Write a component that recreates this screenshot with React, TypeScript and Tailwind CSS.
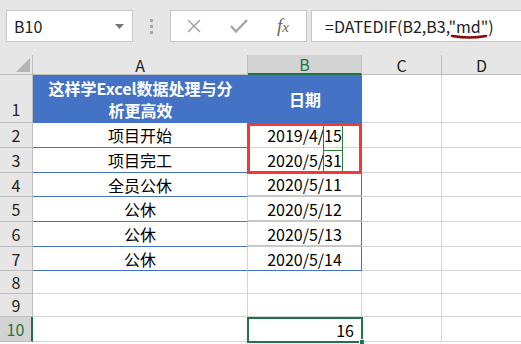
import React from "react";

const F = { fontFamily: '"Noto Sans CJK SC", "Noto Sans", sans-serif' };

const rowH = [48, 25, 25, 24, 25, 25, 24, 23, 23, 25];

type CellProps = { children?: React.ReactNode; className?: string };

function Cell({ children, className = "" }: CellProps) {
  return <div className={`flex items-center overflow-visible whitespace-nowrap text-[16px] text-black ${className}`}>{children}</div>;
}

function Boxed({ pre, tail, top }: { pre: string; tail: string; top: boolean }) {
  return (
    <span>
      {pre}
      <span className="relative">
        {tail}
        <span
          className={`absolute left-[-1px] right-[-1px] border border-[#2e7d32] ${top ? "top-[-2px] bottom-[-4px]" : "top-[-3px] bottom-[-2px] border-t-0"}`}
        />
      </span>
    </span>
  );
}

export default function App() {
  const aText = ["项目开始", "项目完工", "全员公休", "公休", "公休", "公休", "", "", ""];
  const bText: React.ReactNode[] = [
    <Boxed key="a" pre="2019/4/" tail="15" top />,
    <Boxed key="b" pre="2020/5/" tail="31" top={false} />,
    "2020/5/11",
    "2020/5/12",
    "2020/5/13",
    "2020/5/14",
    "",
    "",
    "",
  ];
  return (
    <div className="w-[521px] h-[344px] overflow-hidden bg-white relative" style={F}>
      {/* Toolbar */}
      <div className="h-[55px] bg-[#e6e6e6] flex items-start pt-[10px] pl-[6px]">
        <div className="w-[127px] h-[32px] bg-white border border-[#c6c6c6] flex items-center justify-between pl-[7px] pr-[8px]">
          <span className="text-[16px] text-[#222]">B10</span>
          <svg width="9" height="5" viewBox="0 0 9 5"><path d="M0 0 L9 0 L4.5 5 Z" fill="#777" /></svg>
        </div>
        <div className="w-[37px] h-[32px] flex flex-col items-center justify-center gap-[3px]">
          <div className="w-[3px] h-[3px] bg-[#a8a8a8]" />
          <div className="w-[3px] h-[3px] bg-[#a8a8a8]" />
          <div className="w-[3px] h-[3px] bg-[#a8a8a8]" />
        </div>
        <div className="w-[137px] h-[32px] bg-white border border-[#c6c6c6] flex items-center">
          <div className="w-[46px] flex justify-center">
            <svg width="16" height="16" viewBox="0 0 16 16"><path d="M2 2 L14 14 M14 2 L2 14" stroke="#a6a6a6" strokeWidth="1.6" /></svg>
          </div>
          <div className="w-[44px] flex justify-center">
            <svg width="18" height="16" viewBox="0 0 18 16"><path d="M1 8 L6 13.5 L17 2" stroke="#a6a6a6" strokeWidth="2.4" fill="none" /></svg>
          </div>
          <div className="w-[44px] flex justify-center">
            <span className="text-[19px] italic text-[#666]" style={{ fontFamily: '"Liberation Serif", serif' }}>f<span className="text-[15px]">x</span></span>
          </div>
        </div>
        <div className="ml-[4px] flex-1 h-[32px] bg-white border border-r-0 border-[#c6c6c6] flex items-center pl-[13px] relative">
          <span className="text-[16px] text-[#222]">=DATEDIF(B2,B3,"md")</span>
        </div>
      </div>
      {/* underline annotation */}
      <svg className="absolute left-[450px] top-[33px]" width="40" height="8" viewBox="0 0 40 8">
        <path d="M2 3 Q20 6 36 3" stroke="#8b0a0a" strokeWidth="2.6" fill="none" strokeLinecap="round" />
      </svg>

      {/* Grid */}
      <div
        className="grid relative"
        style={{ gridTemplateColumns: "33px 215px 114px 80px 79px", gridTemplateRows: `20px ${rowH.map((h) => h + "px").join(" ")}` }}
      >
        {/* header row */}
        <div className="bg-[#e6e6e6] border-r border-b border-[#bdbdbd] relative">
          <svg className="absolute right-[2px] bottom-[2px]" width="14" height="14" viewBox="0 0 14 14"><path d="M14 0 L14 14 L0 14 Z" fill="#b4b4b4" /></svg>
        </div>
        <div className="bg-[#e6e6e6] border-r border-b border-[#bdbdbd] flex items-center justify-center text-[16px] text-[#222]">A</div>
        <div className="bg-[#d3d3d3] border-r border-[#bdbdbd] border-b-2 border-b-[#217346] flex items-center justify-center text-[16px] text-[#217346]">B</div>
        <div className="bg-[#e6e6e6] border-r border-b border-[#bdbdbd] flex items-center justify-center text-[16px] text-[#222]">C</div>
        <div className="bg-[#e6e6e6] border-b border-[#bdbdbd] flex items-center justify-center text-[16px] text-[#222]">D</div>

        {/* row 1 */}
        <div className="bg-[#e6e6e6] border-r border-b border-[#bdbdbd] flex items-end justify-center text-[16px] text-[#222] pb-[1px]">1</div>
        <div className="bg-[#4472c4] border-b border-[#4472c4] flex flex-col items-center justify-center text-white font-bold text-[16px] leading-[22px]">
          <div>这样学Excel数据处理与分</div>
          <div>析更高效</div>
        </div>
        <div className="bg-[#4472c4] border-b border-[#4472c4] flex items-center justify-center text-white font-bold text-[16px]">日期</div>
        <div className="border-r border-b border-[#d4d4d4]" />
        <div className="border-b border-[#d4d4d4]" />

        {aText.map((a, i) => {
          const r = i + 2;
          const inTable = r <= 7;
          const sel = r === 10;
          return (
            <React.Fragment key={r}>
              <div
                className={`border-b border-[#bdbdbd] flex items-center justify-center text-[16px] ${
                  sel ? "bg-[#d3d3d3] text-[#217346] border-r-2 border-r-[#217346]" : "bg-[#e6e6e6] text-[#222] border-r border-r-[#bdbdbd]"
                }`}
              >
                {r}
              </div>
              <Cell className={`justify-center ${inTable ? "border-b border-[#4472c4]" : "border-b border-[#d4d4d4]"} border-r border-r-[#d4d4d4]`}>{a}</Cell>
              <Cell
                className={`justify-center ${
                  inTable
                    ? r === 7
                      ? "border-b border-[#4472c4] border-r border-r-[#4472c4]"
                      : r >= 4
                      ? "border-b-2 border-[#c8c8c8] border-r border-r-[#4472c4]"
                      : "border-b border-[#d4d4d4] border-r border-r-[#4472c4]"
                    : "border-b border-r border-[#d4d4d4]"
                }`}
              >
                {bText[i]}
              </Cell>
              <div className="border-r border-b border-[#d4d4d4]" />
              <div className="border-b border-[#d4d4d4]" />
            </React.Fragment>
          );
        })}

        {/* red box B2:B3 */}
        <div className="absolute left-[247px] top-[68px] w-[115px] h-[51px] border-[3px] border-[#f03a3a] pointer-events-none" />
        {/* selection B10 */}
        <div className="absolute left-[247px] top-[262px] w-[116px] h-[26px] border-2 border-[#217346] flex items-center justify-end pr-[7px] text-[16px] text-black">
          16
        </div>
        <div className="absolute left-[359px] top-[284px] w-[6px] h-[6px] bg-[#217346] border border-white" />
      </div>
    </div>
  );
}
